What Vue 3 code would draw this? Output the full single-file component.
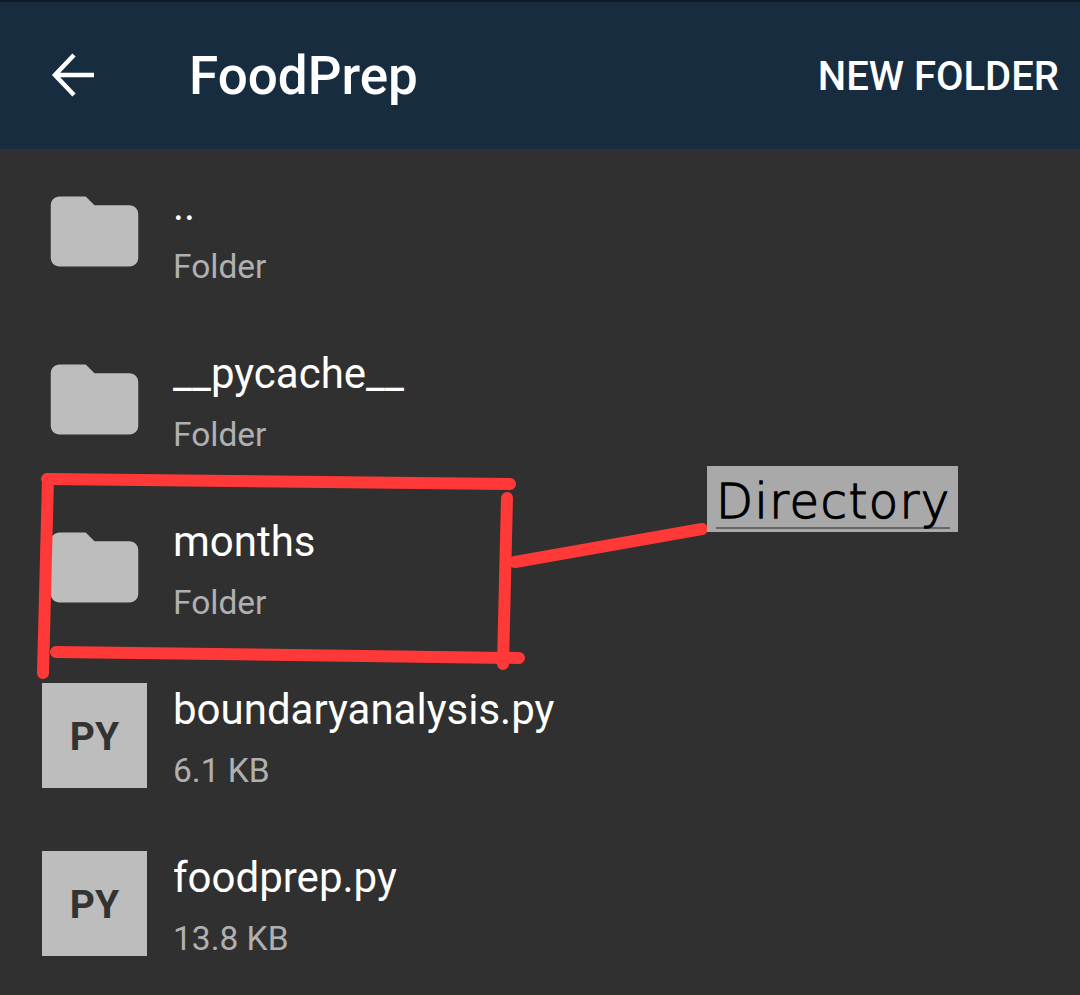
<template>
  <div class="screen">
    <!-- top bar -->
    <header class="topbar">
      <svg class="back" viewBox="0 0 48 48" width="48" height="48">
        <path d="M44 24H6M24 4L5 24l19 20" fill="none" stroke="#fff" stroke-width="4.5" />
      </svg>
      <h1 class="title">FoodPrep</h1>
      <span class="action">NEW FOLDER</span>
    </header>

    <!-- file list -->
    <ul class="files">
      <li v-for="file in files" :key="file.name" class="file">
        <div class="thumb">
          <svg v-if="file.folder" viewBox="0 0 24 24" width="105" height="105">
            <path d="M10 4H4c-1.1 0-2 .9-2 2v12c0 1.1.9 2 2 2h16c1.1 0 2-.9 2-2V8c0-1.1-.9-2-2-2h-8l-2-2z" fill="#bdbdbd" />
          </svg>
          <span v-else class="ext">PY</span>
        </div>
        <div class="info">
          <div class="name">{{ file.name }}</div>
          <div class="meta">{{ file.meta }}</div>
        </div>
      </li>
    </ul>

    <!-- hand drawn annotation on top of the screenshot -->
    <svg class="marks" width="1080" height="995" viewBox="0 0 1080 995">
      <g fill="none" stroke="#ff3838" stroke-width="12" stroke-linecap="round">
        <path d="M47 479L510 484" />
        <path d="M48 479L43 673" />
        <path d="M507 498L503 664" />
        <path d="M56 652L519 658" />
        <path d="M515 562L702 529" />
      </g>
    </svg>
    <div class="label"><span>Directory</span></div>
  </div>
</template>

<script setup>
const files = [
  { name: '..', meta: 'Folder', folder: true },
  { name: '__pycache__', meta: 'Folder', folder: true },
  { name: 'months', meta: 'Folder', folder: true },
  { name: 'boundaryanalysis.py', meta: '6.1 KB' },
  { name: 'foodprep.py', meta: '13.8 KB' }
]
</script>

<style>
html, body {
  margin: 0;
  background: #303030;
}
</style>

<style scoped>
.screen {
  position: relative;
  width: 1080px;
  height: 995px;
  overflow: hidden;
  background: #303030;
  font-family: Roboto, "Liberation Sans", sans-serif;
}

.topbar {
  display: flex;
  align-items: center;
  box-sizing: border-box;
  height: 149px;
  padding: 0 21px 0 50px;
  background: #182c40;
  border-top: 2px solid #0e1a26;
  color: #fff;
}

.back {
  flex: none;
  margin-top: -2px;
}

.title {
  flex: 1;
  margin: 2px 0 0 91px;
  font-size: 53px;
  font-weight: 500;
  line-height: 1;
}

.action {
  margin-top: 2px;
  font-size: 40px;
  font-weight: 500;
}

.files {
  margin: -2px 0 0;
  padding: 0;
  list-style: none;
}

.file {
  display: flex;
  align-items: center;
  gap: 26px;
  height: 168px;
  padding-left: 42px;
}

.thumb {
  display: flex;
  flex: none;
  align-items: center;
  justify-content: center;
  width: 105px;
  height: 105px;
}

.file:nth-child(n + 4) .thumb {
  background: #bdbdbd;
}

.info {
  margin-top: 8px;
}

.ext {
  margin-top: 4px;
  color: #333;
  font-size: 39px;
  font-weight: 700;
}

.name {
  color: #fff;
  font-size: 42px;
  line-height: 50px;
}

.meta {
  margin-top: 14px;
  color: #b0b0b0;
  font-size: 33.5px;
  line-height: 44px;
}

.marks {
  position: absolute;
  top: 0;
  left: 0;
}

.label {
  position: absolute;
  top: 466px;
  left: 707px;
  box-sizing: border-box;
  width: 251px;
  height: 66px;
  padding-left: 9px;
  background: #a9a9a9;
  color: #000;
  font-family: "DejaVu Sans", sans-serif;
  font-size: 48px;
  font-weight: 200;
  -webkit-text-stroke: 1.3px #000;
}

.label span {
  display: block;
  box-sizing: border-box;
  width: 234px;
  height: 63px;
  padding-top: 5px;
  border-bottom: 2px solid #666;
  line-height: 60px;
  letter-spacing: 1.5px;
}
</style>
